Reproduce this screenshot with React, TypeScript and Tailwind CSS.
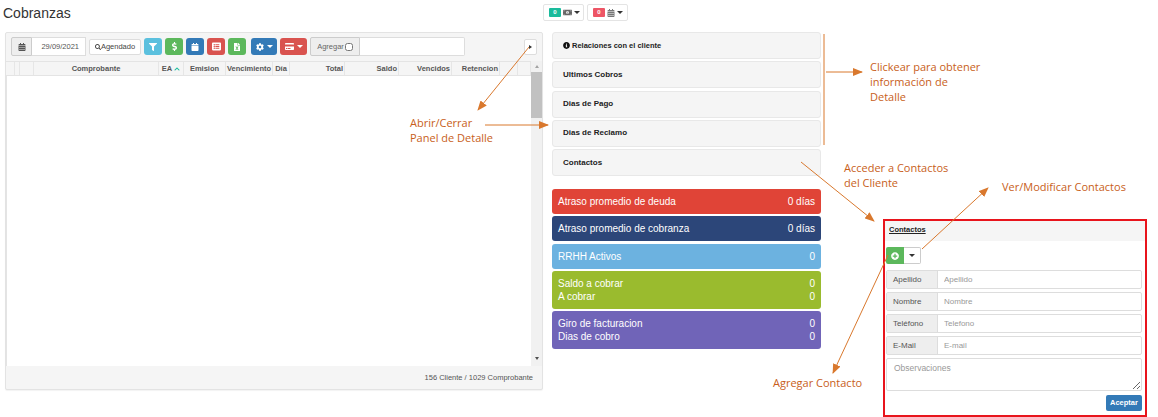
import { FaCalendar, FaCalendarAlt, FaChevronUp, FaCog, FaCreditCard, FaDollarSign, FaFileExcel, FaFilter, FaInfoCircle, FaListAlt, FaMoneyBillAlt, FaPlusCircle, FaSearch } from "react-icons/fa";
import type { ReactNode } from "react";

const columns = [
  { label: "", w: "w-[9px]" },
  { label: "", w: "w-[5px]" },
  { label: "", w: "w-[14px]" },
  { label: "Comprobante", w: "w-[125px]", align: "text-center" },
  { label: "EA", w: "w-[25px]", align: "text-center", sort: true },
  { label: "Emision", w: "w-[42px]", align: "text-center" },
  { label: "Vencimiento", w: "w-[47px]", align: "text-center" },
  { label: "Día", w: "w-[17px]", align: "text-center" },
  { label: "Total", w: "w-[55px]", align: "text-right" },
  { label: "Saldo", w: "w-[54px]", align: "text-right" },
  { label: "Vencidos", w: "w-[53px]", align: "text-right" },
  { label: "Retencion", w: "w-[48px]", align: "text-right" },
  { label: "", w: "w-[18px]" },
  { label: "", w: "w-[13px]" },
];

const details = ["Ultimos Cobros", "Dias de Pago", "Dias de Reclamo", "Contactos"];

const contactFields = [
  { label: "Apellido", placeholder: "Apellido" },
  { label: "Nombre", placeholder: "Nombre" },
  { label: "Teléfono", placeholder: "Telefono" },
  { label: "E-Mail", placeholder: "E-mail" },
];

function ToolButton({ color, children, w }: { color: string; children: ReactNode; w: string }) {
  return (
    <span className={`flex h-[17px] items-center justify-center gap-[3px] rounded-[3px] text-white ${color} ${w}`}>
      {children}
    </span>
  );
}

function Caret({ dark }: { dark?: boolean }) {
  return (
    <span className={`h-0 w-0 border-x-[3px] border-t-[3px] border-x-transparent ${dark ? "border-t-[#333]" : "border-t-white"}`} />
  );
}

function Stat({ color, rows }: { color: string; rows: [string, string][] }) {
  return (
    <div className={`w-[269px] rounded-[3px] px-[6px] py-[6px] text-[10px] leading-[13px] text-white ${color}`}>
      {rows.map(([label, value]) => (
        <div key={label} className="flex justify-between">
          <span>{label}</span>
          <span>{value}</span>
        </div>
      ))}
    </div>
  );
}

function Annotation({ children, className }: { children: ReactNode; className: string }) {
  return (
    <div className={`absolute font-['Open_Sans',sans-serif] text-[11px] leading-[15px] text-[#c8601a] ${className}`}>
      {children}
    </div>
  );
}

export default function App() {
  return (
    <div className="relative h-[417px] w-[1158px] overflow-hidden bg-white font-['Liberation_Sans',sans-serif] text-[#333]">
      <header className="flex h-[32px] items-start">
        <h1 className="ml-[3px] mt-[5px] w-[540px] text-[14px] leading-[16px] text-[#333]">Cobranzas</h1>
        <div className="mt-[4px] flex gap-[3px]">
          <div className="flex h-[17px] w-[41px] items-center gap-[2px] rounded-[2px] border border-[#e4e4e4] pl-[5px]">
            <span className="flex h-[9px] w-[12px] items-center justify-center rounded-[1px] bg-[#1abb9c] text-[6px] font-bold text-white">0</span>
            <FaMoneyBillAlt size={9} className="text-[#666]" />
            <Caret dark />
          </div>
          <div className="flex h-[17px] w-[41px] items-center gap-[2px] rounded-[2px] border border-[#e4e4e4] pl-[5px]">
            <span className="flex h-[9px] w-[12px] items-center justify-center rounded-[1px] bg-[#ed5565] text-[6px] font-bold text-white">0</span>
            <FaCalendarAlt size={8} className="text-[#777]" />
            <Caret dark />
          </div>
        </div>
      </header>

      <main className="flex items-start">
        <section className="ml-[5px] flex h-[358px] w-[538px] flex-col rounded-[2px] border border-[#e3e3e3] bg-[#f5f5f5] shadow-[0_1px_1px_rgba(0,0,0,0.05)]">
          <div className="ml-[5px] mt-[4px] flex h-[19px] flex-none items-center">
            <span className="flex h-[19px] w-[21px] items-center justify-center rounded-l-[2px] border border-[#ccc] bg-[#eee]">
              <FaCalendarAlt size={8} className="text-[#555]" />
            </span>
            <span className="flex h-[19px] w-[54px] items-center justify-end border border-l-0 border-[#ddd] bg-white pr-[6px] text-[7.5px] text-[#555]">29/09/2021</span>
            <span className="ml-[3px] flex h-[16px] w-[52px] items-center justify-center rounded-[2px] border border-[#ddd] bg-white text-[7.5px] text-[#444]">
              <FaSearch size={6} />
              Agendado
            </span>
            <div className="ml-[3px] flex gap-[3px]">
              <ToolButton color="bg-[#5bc0de]" w="w-[18px]"><FaFilter size={8} /></ToolButton>
              <ToolButton color="bg-[#5cb85c]" w="w-[18px]"><FaDollarSign size={9} /></ToolButton>
              <ToolButton color="bg-[#337ab7]" w="w-[18px]"><FaCalendar size={8} /></ToolButton>
              <ToolButton color="bg-[#d9534f]" w="w-[18px]"><FaListAlt size={9} /></ToolButton>
              <ToolButton color="bg-[#5cb85c]" w="w-[18px]"><FaFileExcel size={8} /></ToolButton>
            </div>
            <div className="ml-[5px] flex gap-[3px]">
              <ToolButton color="bg-[#337ab7]" w="w-[26px]"><FaCog size={8} /><Caret /></ToolButton>
              <ToolButton color="bg-[#d9534f]" w="w-[27px]"><FaCreditCard size={9} /><Caret /></ToolButton>
            </div>
            <span className="ml-[3px] flex h-[19px] w-[50px] items-center justify-center gap-[1px] rounded-l-[2px] border border-[#ccc] bg-[#eee] text-[7.5px] text-[#666]">
              Agregar
              <input type="checkbox" className="m-0 h-[8px] w-[8px]" />
            </span>
            <span className="h-[19px] w-[105px] rounded-r-[2px] border border-l-0 border-[#ddd] bg-white" />
            <span className="ml-[59px] flex h-[16px] w-[13px] items-center justify-center rounded-[2px] border border-[#ddd] bg-white">
              <span className="h-0 w-0 border-y-[2px] border-l-[3px] border-y-transparent border-l-[#333]" />
            </span>
          </div>

          <div className="mt-[5px] flex flex-1">
            <div className="flex flex-1 flex-col">
              <div className="flex h-[15px] flex-none items-stretch border-y border-[#e4e4e4] text-[7.5px] font-bold leading-[13px] text-[#555]">
                {columns.map((col, i) => (
                  <div key={i} className={`flex flex-none whitespace-nowrap border-r border-[#e6e6e6] ${col.w} ${col.align === "text-right" ? "justify-end pr-[1px]" : "justify-center"}`}>
                    {col.label}
                    {col.sort && <FaChevronUp size={6} className="ml-[2px] mt-[4px] text-[#1abb9c]" />}
                  </div>
                ))}
              </div>
              <div className="flex-1 border-l border-[#e4e4e4] bg-white" />
            </div>
            <div className="flex w-[11px] flex-none flex-col items-center bg-[#f1f1f1]">
              <span className="mt-[4px] h-0 w-0 border-x-[2px] border-b-[3px] border-x-transparent border-b-[#a3a3a3]" />
              <span className="mt-[4px] h-[46px] w-full bg-[#c1c1c1]" />
              <span className="mb-[6px] mt-auto h-0 w-0 border-x-[2px] border-t-[3px] border-x-transparent border-t-[#505050]" />
            </div>
          </div>

          <div className="flex h-[23px] flex-none items-center justify-end pr-[9px] pt-[1px] text-[7.5px] text-[#555]">156 Cliente / 1029 Comprobante</div>
        </section>

        <div className="ml-[9px] flex flex-col">
          <div className="flex flex-col gap-[2.25px]">
            <div className="flex h-[27px] w-[269px] items-center gap-[2px] rounded-[3px] border border-[#e8e8e8] bg-[#f5f5f5] pl-[10px] text-[7.5px] font-bold text-[#222]">
              <FaInfoCircle size={7} className="text-[#111]" />
              Relaciones con el cliente
            </div>
            {details.map((d) => (
              <div key={d} className="flex h-[27px] w-[269px] items-center rounded-[3px] border border-[#e8e8e8] bg-[#f5f5f5] pl-[10px] text-[8px] font-bold text-[#222]">
                {d}
              </div>
            ))}
          </div>

          <div className="mt-[13px] flex flex-col gap-[2.25px]">
            <Stat color="bg-[#e04437]" rows={[["Atraso promedio de deuda", "0 días"]]} />
            <Stat color="bg-[#2c4679]" rows={[["Atraso promedio de cobranza", "0 días"]]} />
            <Stat color="bg-[#6cb2e0]" rows={[["RRHH Activos", "0"]]} />
            <Stat color="bg-[#9abb2e]" rows={[["Saldo a cobrar", "0"], ["A cobrar", "0"]]} />
            <Stat color="bg-[#7064b8]" rows={[["Giro de facturacion", "0"], ["Dias de cobro", "0"]]} />
          </div>
        </div>

        <section className="ml-[62px] mt-[187px] flex h-[198px] w-[264px] flex-col border-2 border-[#e8141c] bg-white">
          <div className="flex h-[20px] flex-none items-center bg-[#f5f5f5] pb-[2px] pl-[4px] text-[7.5px] font-bold text-[#222] underline">Contactos</div>
          <div className="ml-[1px] mt-[6px] flex h-[17px] w-[35px] flex-none">
            <span className="flex w-[18px] items-center justify-center rounded-l-[2px] bg-[#5cb85c]">
              <FaPlusCircle size={8} className="text-white" />
            </span>
            <span className="flex flex-1 items-center justify-center rounded-r-[2px] border border-l-0 border-[#ccc]">
              <Caret dark />
            </span>
          </div>
          <div className="ml-[1px] mt-[6px] flex w-[256px] flex-col gap-[3px]">
            {contactFields.map((f) => (
              <div key={f.label} className="flex h-[19px] rounded-[2px] border border-[#ddd] text-[8px]">
                <span className="flex w-[51px] flex-none items-center border-r border-[#ddd] bg-[#eee] pl-[6px] text-[#555]">{f.label}</span>
                <input placeholder={f.placeholder} className="min-w-0 flex-1 pl-[6px] outline-none placeholder:text-[#999]" />
              </div>
            ))}
            <textarea placeholder="Observaciones" className="block h-[33px] rounded-[2px] border border-[#ddd] pl-[7px] pt-[3px] text-[8.5px] outline-none placeholder:text-[#999]" />
          </div>
          <span className="ml-auto mr-[3px] mt-[4px] flex h-[16px] w-[36px] flex-none items-center justify-center rounded-[2px] bg-[#337ab7] text-[7.5px] font-bold text-white">Aceptar</span>
        </section>
      </main>

      <Annotation className="left-[410px] top-[115px]">Abrir/Cerrar<br />Panel de Detalle</Annotation>
      <Annotation className="left-[870px] top-[59px]">Clickear para obtener<br />información de<br />Detalle</Annotation>
      <Annotation className="left-[844px] top-[160px]">Acceder a Contactos<br />del Cliente</Annotation>
      <Annotation className="left-[1002px] top-[179px]">Ver/Modificar Contactos</Annotation>
      <Annotation className="left-[773px] top-[375px]">Agregar Contacto</Annotation>

      <svg className="pointer-events-none absolute left-0 top-0" width="1158" height="417" fill="none" stroke="#d9782d" strokeWidth="1">
        <defs>
          <marker id="head" markerWidth="10" markerHeight="8" refX="9" refY="4" orient="auto" markerUnits="userSpaceOnUse">
            <path d="M0 0 L10 4 L0 8 Z" fill="#d9782d" stroke="none" />
          </marker>
        </defs>
        <line x1="529" y1="47" x2="478" y2="110" markerEnd="url(#head)" />
        <line x1="485" y1="125" x2="548" y2="125" markerEnd="url(#head)" />
        <line x1="824" y1="34" x2="824" y2="145" />
        <line x1="826" y1="72" x2="862" y2="72" markerEnd="url(#head)" />
        <line x1="801" y1="162" x2="874" y2="221" markerEnd="url(#head)" />
        <line x1="922" y1="249" x2="988" y2="188" markerEnd="url(#head)" />
        <line x1="888" y1="255" x2="833" y2="373" markerEnd="url(#head)" />
      </svg>
    </div>
  );
}
